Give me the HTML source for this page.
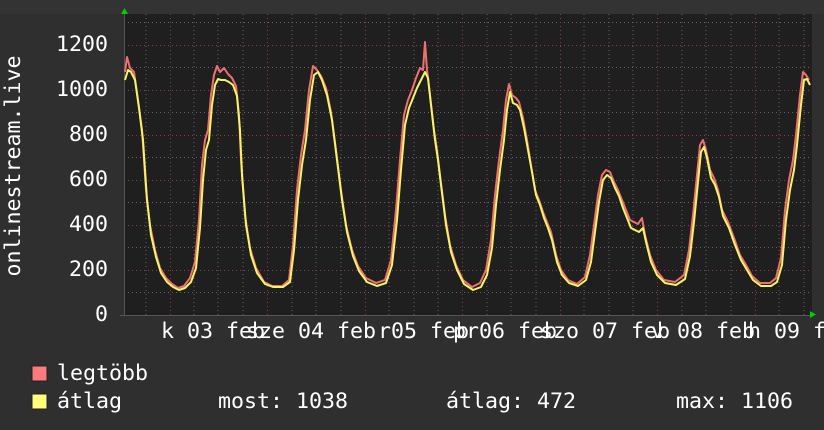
<!DOCTYPE html>
<html><head><meta charset="utf-8"><style>
html,body{margin:0;padding:0;background:#2f2f2f;}
#c{position:relative;width:824px;height:430px;overflow:hidden;background:#2f2f2f;font-family:"DejaVu Sans Mono","Liberation Mono",monospace;font-size:21.6px;color:#fff;}
.t{position:absolute;white-space:pre;line-height:1;}
.y{position:absolute;right:716px;text-align:right;line-height:1;}
</style></head><body><div id="c">
<svg width="824" height="430" style="position:absolute;left:0;top:0">
<rect x="0" y="0" width="824" height="14" fill="#333"/>
<rect x="124" y="14" width="688" height="301" fill="#1f1f1f"/>
<g stroke="#666" stroke-width="1" stroke-dasharray="1,3">
<line x1="124" x2="810" y1="292.5" y2="292.5"/><line x1="124" x2="810" y1="247.5" y2="247.5"/>
<line x1="124" x2="810" y1="202.5" y2="202.5"/><line x1="124" x2="810" y1="157.5" y2="157.5"/>
<line x1="124" x2="810" y1="112.5" y2="112.5"/><line x1="124" x2="810" y1="67.5" y2="67.5"/>
<line x1="124" x2="810" y1="22.5" y2="22.5"/>
<line x1="146" x2="146" y1="14" y2="315"/><line x1="194" x2="194" y1="14" y2="315"/><line x1="218" x2="218" y1="14" y2="315"/><line x1="243" x2="243" y1="14" y2="315"/>
<line x1="292" x2="292" y1="14" y2="315"/><line x1="316" x2="316" y1="14" y2="315"/><line x1="341" x2="341" y1="14" y2="315"/>
<line x1="389" x2="389" y1="14" y2="315"/><line x1="414" x2="414" y1="14" y2="315"/><line x1="438" x2="438" y1="14" y2="315"/>
<line x1="487" x2="487" y1="14" y2="315"/><line x1="511" x2="511" y1="14" y2="315"/><line x1="536" x2="536" y1="14" y2="315"/>
<line x1="584" x2="584" y1="14" y2="315"/><line x1="609" x2="609" y1="14" y2="315"/><line x1="633" x2="633" y1="14" y2="315"/>
<line x1="682" x2="682" y1="14" y2="315"/><line x1="706" x2="706" y1="14" y2="315"/><line x1="731" x2="731" y1="14" y2="315"/>
<line x1="779" x2="779" y1="14" y2="315"/><line x1="804" x2="804" y1="14" y2="315"/>
</g>
<g stroke="#8a4040" stroke-width="1" stroke-dasharray="1,3">
<line x1="124" x2="810" y1="270.5" y2="270.5"/><line x1="124" x2="810" y1="225.5" y2="225.5"/>
<line x1="124" x2="810" y1="180.5" y2="180.5"/><line x1="124" x2="810" y1="135.5" y2="135.5"/>
<line x1="124" x2="810" y1="90.5" y2="90.5"/><line x1="124" x2="810" y1="45.5" y2="45.5"/>
<line x1="170.5" x2="170.5" y1="14" y2="315"/><line x1="267.5" x2="267.5" y1="14" y2="315"/><line x1="365.5" x2="365.5" y1="14" y2="315"/>
<line x1="462.5" x2="462.5" y1="14" y2="315"/><line x1="560.5" x2="560.5" y1="14" y2="315"/><line x1="657.5" x2="657.5" y1="14" y2="315"/><line x1="755.5" x2="755.5" y1="14" y2="315"/>
</g>
<line x1="124.5" y1="10" x2="124.5" y2="316" stroke="#555"/>
<line x1="120" y1="315.5" x2="812" y2="315.5" stroke="#555"/>
<polygon points="121,14 128,14 124.5,8" fill="#0c0"/>
<polygon points="810,311 810,318 816,314.5" fill="#0c0"/>
<polyline fill="none" stroke="#f07070" stroke-width="2" stroke-linejoin="round" points="125,72 127,57 130,68 134,72 138,100 142,130 146,190 150,225 155,250 160,268 166,278 172,284 178,288 184,286 190,278 195,262 199,220 202,165 205,140 208,130 211,95 214,75 217,66 220,72 224,68 228,74 232,78 236,86 239,115 241,160 245,215 250,248 256,268 264,282 272,286 282,286 289,280 293,245 297,190 301,155 305,130 309,90 313,66 317,70 321,76 326,88 331,112 336,150 341,190 346,225 352,250 358,266 366,278 376,283 385,280 391,260 396,210 400,160 404,115 408,100 412,90 416,78 420,68 423,70 425,42 427,70 430,95 434,130 437,150 440,175 445,215 450,245 456,265 463,280 472,287 480,283 486,270 491,240 495,195 499,160 503,130 506,100 509,84 512,95 516,98 519,102 523,118 527,140 531,165 535,190 539,200 543,212 547,222 551,232 556,255 561,270 568,280 577,284 585,277 590,255 594,225 598,195 602,175 606,170 610,172 614,182 618,190 622,200 626,210 630,220 634,222 638,224 642,218 645,235 650,255 656,270 664,280 675,282 684,275 689,250 693,215 697,175 700,145 703,140 706,150 710,170 714,178 718,190 722,210 728,222 734,238 740,255 746,265 752,276 760,283 770,283 776,278 781,258 785,210 789,180 793,160 796,135 800,95 803,72 806,75 809,80"/>
<polyline fill="none" stroke="#f5f567" stroke-width="2" stroke-linejoin="round" points="125,80 128,70 131,72 135,80 139,108 143,140 147,200 151,235 156,257 161,273 167,282 173,287 179,290 185,288 191,282 196,268 200,228 203,180 206,150 209,140 212,105 215,85 218,79 221,80 225,80 229,82 233,85 237,96 240,130 242,175 246,225 251,255 257,273 265,284 273,287 283,287 290,282 294,250 298,200 302,165 306,140 310,100 314,75 318,72 322,80 327,95 332,120 337,160 342,200 347,232 353,256 359,271 367,282 377,286 386,283 392,265 397,220 401,170 405,125 409,108 413,98 417,88 421,80 425,72 428,78 431,105 435,140 438,160 441,185 446,225 451,252 457,270 464,284 473,290 481,287 487,275 492,248 496,205 500,170 504,140 507,110 510,92 513,103 517,105 520,110 524,128 528,150 532,172 536,195 540,205 544,218 548,228 552,240 557,262 562,275 569,283 578,286 586,280 591,262 595,232 599,202 603,180 607,175 611,178 615,188 619,196 623,208 627,218 631,228 635,230 639,232 643,228 646,242 651,262 657,275 665,283 676,285 685,279 690,256 694,222 698,182 701,152 704,147 707,158 711,178 715,185 719,197 723,216 729,228 735,245 741,260 747,270 753,280 761,286 771,286 777,282 782,265 786,220 790,190 794,170 797,145 801,105 804,80 807,79 810,85"/>
<rect x="32" y="366" width="15" height="15" fill="#ff7b7b" stroke="#222"/>
<rect x="32" y="394" width="15" height="15" fill="#ffff7a" stroke="#222"/>
<text x="14" y="166" fill="#fff" font-family="DejaVu Sans Mono, Liberation Mono, monospace" font-size="21.6" text-anchor="middle" transform="rotate(-90 14 166)" dominant-baseline="middle">onlinestream.live</text>
</svg>
<div class="y" style="top:34px">1200</div>
<div class="y" style="top:79px">1000</div>
<div class="y" style="top:124px">800</div>
<div class="y" style="top:169px">600</div>
<div class="y" style="top:214px">400</div>
<div class="y" style="top:259px">200</div>
<div class="y" style="top:304px">0</div>
<div class="t" style="left:161px;top:321px">k 03 feb</div>
<div class="t" style="left:246px;top:321px">sze 04 feb</div>
<div class="t" style="left:378px;top:321px">r05 feb</div>
<div class="t" style="left:453px;top:321px">p</div>
<div class="t" style="left:466px;top:321px">r06 feb</div>
<div class="t" style="left:540px;top:321px">szo 07 feb</div>
<div class="t" style="left:651px;top:321px">v 08 feb</div>
<div class="t" style="left:748px;top:321px">h 09 f</div>
<div class="t" style="left:57px;top:363px">legtöbb</div>
<div class="t" style="left:57px;top:391px">átlag</div>
<div class="t" style="left:218px;top:391px">most: 1038</div>
<div class="t" style="left:446px;top:391px">átlag: 472</div>
<div class="t" style="left:676px;top:391px">max: 1106</div>
</div></body></html>
